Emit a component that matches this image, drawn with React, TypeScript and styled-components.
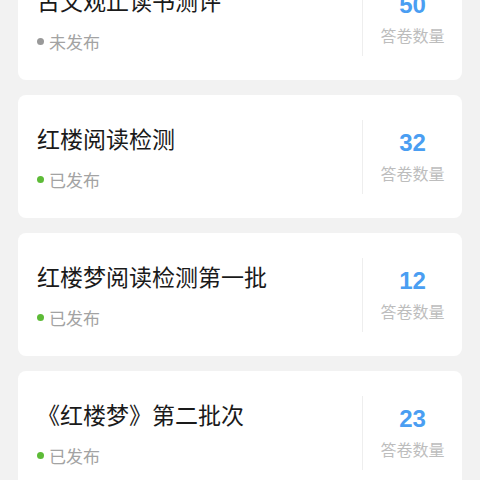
import styled, { createGlobalStyle } from "styled-components";

const GlobalStyle = createGlobalStyle`
  html, body {
    margin: 0;
    padding: 0;
    background: #f2f2f2;
    font-family: "Noto Sans CJK SC", "Noto Sans", sans-serif;
  }
`;

const Viewport = styled.div`
  height: 480px;
  overflow: hidden;
`;

const List = styled.div`
  display: flex;
  flex-direction: column;
  gap: 15px;
  padding: 0 18px;
  margin-top: -43px;
`;

const Card = styled.div`
  flex: 0 0 123px;
  display: flex;
  align-items: center;
  background: #ffffff;
  border-radius: 8px;
`;

const Main = styled.div`
  flex: 1;
  display: flex;
  flex-direction: column;
  gap: 18px;
  padding-left: 19px;
  padding-top: 2px;
`;

const Title = styled.div`
  font-size: 23px;
  line-height: 26px;
  color: #1a1a1a;
`;

const Status = styled.div`
  display: flex;
  align-items: center;
  gap: 5px;
  font-size: 17px;
  line-height: 22px;
  color: #a3a3a3;
`;

const Dot = styled.span<{ $on: boolean }>`
  width: 7px;
  height: 7px;
  border-radius: 50%;
  background: ${(p) => (p.$on ? "#5dbb37" : "#999999")};
`;

const Stat = styled.div`
  width: 99px;
  height: 74px;
  border-left: 1px solid #eeeeee;
  display: flex;
  flex-direction: column;
  align-items: center;
  justify-content: center;
  gap: 7px;
`;

const Num = styled.div`
  font-family: "Liberation Sans", Arial, sans-serif;
  font-weight: bold;
  font-size: 24px;
  line-height: 26px;
  color: #4a9ef2;
`;

const Label = styled.div`
  font-size: 16px;
  line-height: 20px;
  color: #bdbdbd;
`;

const items = [
  { title: "古文观止读书测评", on: false, count: 50 },
  { title: "红楼阅读检测", on: true, count: 32 },
  { title: "红楼梦阅读检测第一批", on: true, count: 12 },
  { title: "《红楼梦》第二批次", on: true, count: 23 },
];

export default function App() {
  return (
    <>
      <GlobalStyle />
      <Viewport>
        <List>
          {items.map((it) => (
            <Card key={it.title}>
              <Main>
                <Title>{it.title}</Title>
                <Status>
                  <Dot $on={it.on} />
                  {it.on ? "已发布" : "未发布"}
                </Status>
              </Main>
              <Stat>
                <Num>{it.count}</Num>
                <Label>答卷数量</Label>
              </Stat>
            </Card>
          ))}
        </List>
      </Viewport>
    </>
  );
}
